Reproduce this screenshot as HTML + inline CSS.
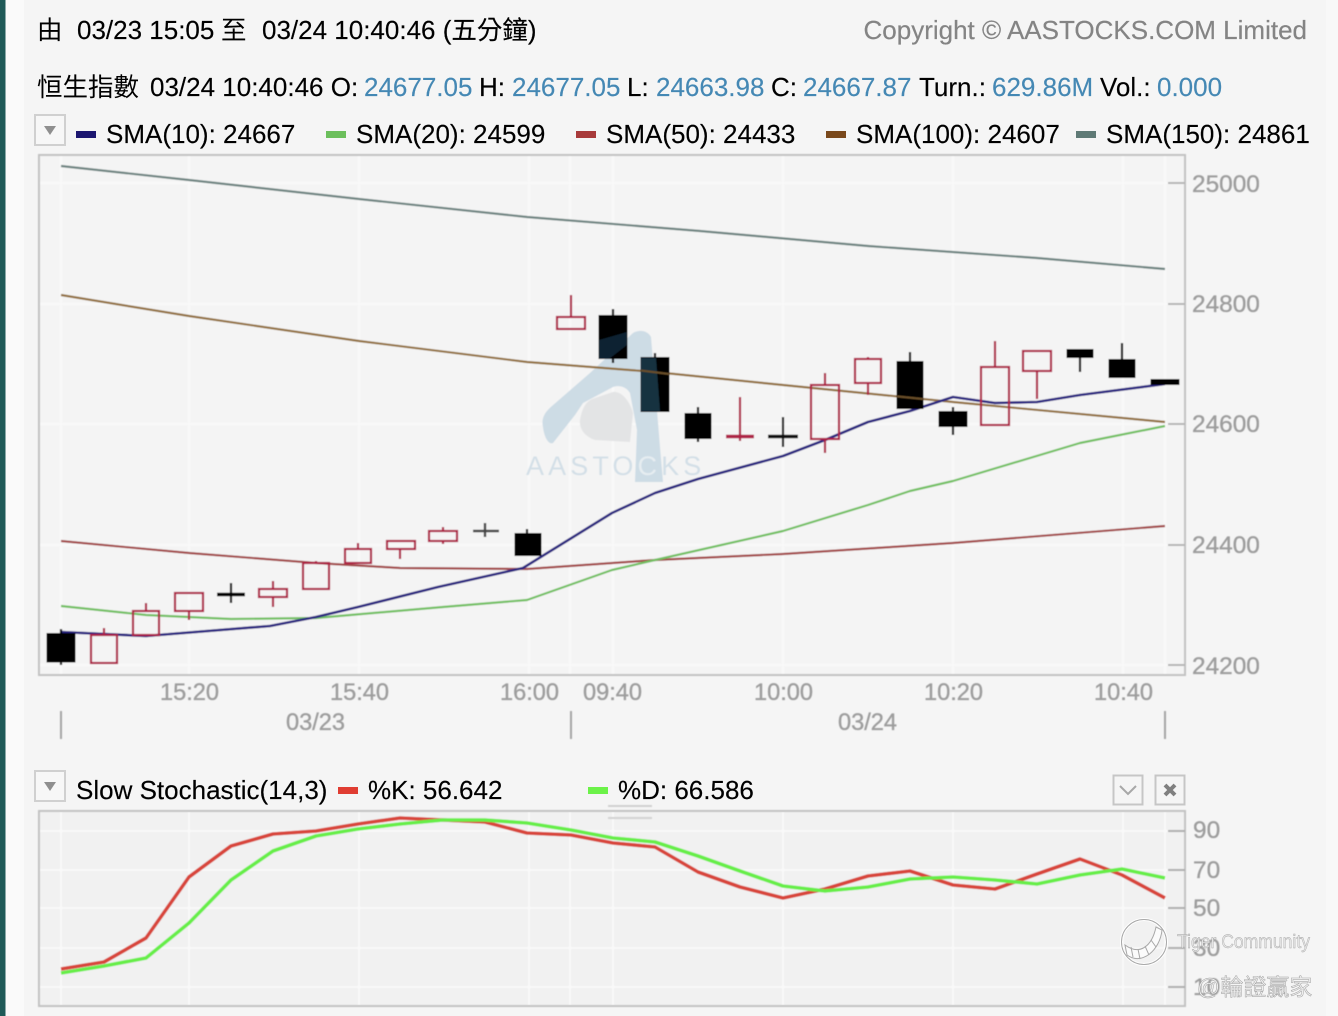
<!DOCTYPE html>
<html lang="zh-Hant">
<head>
<meta charset="utf-8">
<title>AASTOCKS Chart</title>
<style>
html,body{margin:0;padding:0;width:1338px;height:1016px;overflow:hidden;background:#f5f5f5}
svg{display:block;position:absolute;left:0;top:0}
text{font-family:"Liberation Sans","Noto Sans CJK TC",sans-serif}
.t{font-size:26px;fill:#000;stroke:#000;stroke-width:.15}
.c{font-size:25.5px;fill:#000}
.b{font-size:26px;fill:#4488b4;stroke:#4488b4;stroke-width:.15}
.g{font-size:24.4px;fill:#9d9d9d;stroke:#9d9d9d;stroke-width:.35}
.x{font-size:23.6px;fill:#9d9d9d;stroke:#9d9d9d;stroke-width:.35}
.r{fill:none;stroke:#ad2045;stroke-width:2.2}
.w{stroke:#ad2045;stroke-width:2.2}
.k{fill:#000;stroke:#000;stroke-width:1}
.kw{stroke:#000;stroke-width:2.2}
.ln{fill:none;stroke-linejoin:round}
</style>
</head>
<body>
<svg width="1338" height="1016" viewBox="0 0 1338 1016" xmlns="http://www.w3.org/2000/svg">
<defs><filter id="s" x="-2%" y="-2%" width="104%" height="104%"><feGaussianBlur stdDeviation="0.5"/></filter>
<filter id="h" x="-2%" y="-2%" width="104%" height="104%"><feGaussianBlur stdDeviation="0.25"/></filter></defs>
<rect x="0" y="0" width="1338" height="1016" fill="#f5f5f5"/>
<rect x="5" y="0" width="19" height="1016" fill="#fafafa"/>
<rect x="1326" y="0" width="12" height="1016" fill="#f8f8f8"/>
<rect x="0" y="0" width="5.5" height="1016" fill="#1f5a58"/>

<g filter="url(#h)">
<!-- header text -->
<text class="c" x="37" y="39">由</text>
<text class="t" x="77" y="39">03/23 15:05</text>
<text class="c" x="221" y="39">至</text>
<text class="t" x="262" y="39">03/24 10:40:46 (<tspan style="font-size:25.5px">五分鐘</tspan>)</text>
<text x="1307" y="39" text-anchor="end" style="font-size:26px;fill:#848484;stroke:#848484;stroke-width:.2">Copyright © AASTOCKS.COM Limited</text>

<text class="c" x="37" y="96">恒生指數</text>
<text class="t" x="150" y="96">03/24 10:40:46 O:</text>
<text class="b" x="364" y="96">24677.05</text>
<text class="t" x="479" y="96">H:</text>
<text class="b" x="512" y="96">24677.05</text>
<text class="t" x="627" y="96">L:</text>
<text class="b" x="656" y="96">24663.98</text>
<text class="t" x="771" y="96">C:</text>
<text class="b" x="803" y="96">24667.87</text>
<text class="t" x="919" y="96">Turn.:</text>
<text class="b" x="992" y="96">629.86M</text>
<text class="t" x="1100" y="96">Vol.:</text>
<text class="b" x="1157" y="96">0.000</text>

<!-- legend -->
<rect x="76" y="131" width="20" height="7" fill="#1b1470"/>
<text class="t" x="106" y="143">SMA(10): 24667</text>
<rect x="326" y="131" width="20" height="7" fill="#6cbf5c"/>
<text class="t" x="356" y="143">SMA(20): 24599</text>
<rect x="576" y="131" width="20" height="7" fill="#a83a3a"/>
<text class="t" x="606" y="143">SMA(50): 24433</text>
<rect x="826" y="131" width="20" height="7" fill="#7a4a1a"/>
<text class="t" x="856" y="143">SMA(100): 24607</text>
<rect x="1076" y="131" width="20" height="7" fill="#5f7a76"/>
<text class="t" x="1106" y="143">SMA(150): 24861</text>
</g>

<!-- dropdown -->
<rect x="35" y="115" width="30" height="30" fill="#f7f7f7" stroke="#d0d0d0" stroke-width="2"/>
<path d="M44 126h12l-6 9z" fill="#8f8f8f"/>

<g filter="url(#s)">
<!-- main plot -->
<rect x="39" y="155" width="1146" height="520" fill="#f4f4f4" stroke="#c2c2c2" stroke-width="2"/>
<g stroke="#f9f9f9" stroke-width="2">
<path d="M40 183H1184M40 304H1184M40 424H1184M40 545H1184M40 665H1184"/>
<path d="M61 156V674M189 156V674M359 156V674M529 156V674M570 156V674M613 156V674M783 156V674M953 156V674M1123 156V674M1165 156V674"/>
</g>
<path d="M1168 183H1185M1168 304H1185M1168 424H1185M1168 545H1185M1168 665H1185" stroke="#b5b5b5" stroke-width="2"/>

<!-- watermark -->
<path d="M633 333C640 329 648 331 651 337L660 447L663 482H635L637 430L630 393C626 386 618 385 613 387L583 403L575 415L553 443C548 445 544 436 543 427C541 418 545 412 552 406L590 373Z" fill="#cddce5"/>
<path d="M580 420C582 408 586 402 592 399L613 392C622 391 630 402 633 413L630 442L595 440C586 437 579 430 580 420Z" fill="#e3e4e5"/>
<text x="526" y="475" style="font-size:27px;fill:#d3dfe7;letter-spacing:4.1px">AASTO<tspan style="fill:#e6edf1">C</tspan>KS</text>

<!-- MAs -->
<polyline class="ln" stroke="#6d8380" stroke-width="2.2" points="61,166 189,180 359,199 527,217 700,231 868,246 1037,258 1165,269"/>
<polyline class="ln" stroke="#93713f" stroke-width="2.2" points="61,295 189,316 359,341 527,362 655,372 783,385 953,402 1165,422"/>
<polyline class="ln" stroke="#a34848" stroke-width="2.2" points="61,541 189,553 316,563 400,568 527,569 655,560 783,554 953,543 1165,526"/>
<polyline class="ln" stroke="#72c062" stroke-width="2.2" points="61,606 146,615 231,619 316,618 443,607 527,600 612,570 655,560 783,531 868,505 910,491 953,481 1080,443 1165,426"/>
<polyline class="ln" stroke="#2b2580" stroke-width="2.6" points="61,632 146,636 270,626 316,617 358,607 438,587 523,568 612,513 655,493 698,479 783,456 825,440 868,422 910,411 953,397 995,403 1037,402 1080,395 1165,384"/>

<!-- candles -->
<path class="kw" d="M61 629V665M527 529V556M613 309V363M655 353V412M698 407V442M910 352V409M953 407V435M1080 358V372M1122 343V378"/>
<rect class="k" x="47" y="633.5" width="28" height="28.5"/>
<rect class="k" x="515" y="533.5" width="26" height="22"/>
<rect class="k" x="599" y="315.5" width="28" height="43"/>
<rect class="k" x="641" y="357.5" width="28" height="54"/>
<rect class="k" x="685" y="413.5" width="26" height="25"/>
<rect class="k" x="897" y="361.5" width="26" height="47"/>
<rect class="k" x="939" y="411.5" width="28" height="15"/>
<rect class="k" x="1067" y="349.5" width="26" height="8"/>
<rect class="k" x="1109" y="359.5" width="26" height="18"/>
<rect class="k" x="1151" y="379.5" width="28" height="5"/>
<!-- faint watermark tint over the dark candles -->
<path d="M641 358H656L660 411H641Z" fill="#16313f"/>
<path d="M599 359V340L627 332V345L609 359Z" fill="#0d2430"/>
<path d="M641 370.5L669 374" stroke="#6b4f2a" stroke-width="2"/>
<path d="M897 396.4L923 399" stroke="#6b4f2a" stroke-width="2"/>
<path class="kw" d="M231 583V603"/>
<path d="M217 594.5H245" stroke="#000" stroke-width="3.500"/>
<path d="M473 531H499M485 523V537" stroke="#444" stroke-width="2.400"/>
<path d="M783 417V447" stroke="#111" stroke-width="2.200"/>
<path d="M768 436.5H798" stroke="#111" stroke-width="3.500"/>
<path d="M726 436.5H754" stroke="#ad2045" stroke-width="3.500"/>
<path class="w" d="M740 397V441M104 628V635M146 603V611M189 611V620M273 581V589M273 597V607M316 561V563M358 543V549M400 549V559M443 527V531M443 541V544M571 295V317M825 373V386M825 439V453M868 357V359M868 383V395M995 341V367M1037 371V399"/>
<rect class="r" x="91" y="635" width="26" height="28"/>
<rect class="r" x="133" y="611" width="26" height="24"/>
<rect class="r" x="175" y="593" width="28" height="18"/>
<rect class="r" x="259" y="589" width="28" height="8"/>
<rect class="r" x="303" y="563" width="26" height="26"/>
<rect class="r" x="345" y="549" width="26" height="14"/>
<rect class="r" x="387" y="541" width="28" height="8"/>
<rect class="r" x="429" y="531" width="28" height="10"/>
<rect class="r" x="557" y="317" width="28" height="12"/>
<rect class="r" x="811" y="385" width="28" height="54"/>
<rect class="r" x="855" y="359" width="26" height="24"/>
<rect class="r" x="981" y="367" width="28" height="58"/>
<rect class="r" x="1023" y="351" width="28" height="20"/>
</g>

<g filter="url(#s)">
<!-- y labels main -->
<text class="g" x="1192" y="192">25000</text>
<text class="g" x="1192" y="312">24800</text>
<text class="g" x="1192" y="432">24600</text>
<text class="g" x="1192" y="553">24400</text>
<text class="g" x="1192" y="674">24200</text>
<!-- x labels -->
<text class="x" x="160" y="700">15:20</text>
<text class="x" x="330" y="700">15:40</text>
<text class="x" x="500" y="700">16:00</text>
<text class="x" x="583" y="700">09:40</text>
<text class="x" x="754" y="700">10:00</text>
<text class="x" x="924" y="700">10:20</text>
<text class="x" x="1094" y="700">10:40</text>
<text class="x" x="286" y="730">03/23</text>
<text class="x" x="838" y="730">03/24</text>
<path d="M61 711V739M571 711V739M1165 711V739" stroke="#a6a6a6" stroke-width="2"/>
</g>

<!-- stochastic header -->
<rect x="35" y="771" width="30" height="30" fill="#f7f7f7" stroke="#d0d0d0" stroke-width="2"/>
<path d="M44 782h12l-6 9z" fill="#8f8f8f"/>
<g filter="url(#h)">
<text class="t" x="76" y="799">Slow Stochastic(14,3)</text>
<rect x="338" y="787" width="20" height="7" fill="#e03c30"/>
<text class="t" x="368" y="799">%K: 56.642</text>
<rect x="588" y="787" width="20" height="7" fill="#6cf24a"/>
<text class="t" x="618" y="799">%D: 66.586</text>
</g>
<rect x="1113.500" y="775.500" width="29" height="29" fill="none" stroke="#c6c6c6" stroke-width="2"/>
<path d="M1120 786l8 8 8-8" fill="none" stroke="#a8a8a8" stroke-width="2"/>
<rect x="1155.500" y="775.500" width="29" height="29" fill="none" stroke="#c6c6c6" stroke-width="2"/>
<path d="M1165 785l10 10M1175 785l-10 10" fill="none" stroke="#808080" stroke-width="4"/>

<g filter="url(#s)">
<!-- stochastic plot -->
<rect x="39" y="811" width="1146" height="195" fill="#f1f1f1" stroke="#c2c2c2" stroke-width="2"/>
<g stroke="#f9f9f9" stroke-width="2">
<path d="M40 831H1184M40 870H1184M40 908H1184M40 948H1184M40 987H1184"/>
<path d="M61 812V1005M189 812V1005M359 812V1005M529 812V1005M570 812V1005M613 812V1005M783 812V1005M953 812V1005M1123 812V1005M1165 812V1005"/>
</g>
<path d="M1168 831H1185M1168 870H1185M1168 908H1185M1168 948H1185M1168 987H1185" stroke="#adadad" stroke-width="2"/>
<path d="M608 806H652M608 818H652" stroke="#d2d2d2" stroke-width="2"/>
<polyline class="ln" stroke="#d8443a" stroke-width="3.600" points="61,969 104,962 146,938 189,877 231,846 273,834 316,831 358,824 400,818 443,820 485,822 527,833 571,835 613,843 655,847 698,872 740,887 783,898 825,889 868,876 910,871 953,885 995,889 1037,874 1080,859 1122,875 1165,898"/>
<polyline class="ln" stroke="#66ee46" stroke-width="3.600" points="61,973 104,966 146,958 189,923 231,880 273,851 316,836 358,829 400,824 443,820 485,820 527,823 571,830 613,838 655,842 698,856 740,871 783,886 825,891 868,887 910,879 953,877 995,880 1037,884 1080,875 1122,869 1165,878"/>
<text class="g" x="1193" y="838">90</text>
<text class="g" x="1193" y="878">70</text>
<text class="g" x="1193" y="916">50</text>
<text class="g" x="1193" y="956">30</text>
<text class="g" x="1193" y="995">10</text>
</g>

<!-- tiger community watermark -->
<g>
<circle cx="1144" cy="942" r="22.500" fill="none" stroke="#ffffff" stroke-width="3"/>
<circle cx="1144" cy="942" r="22.500" fill="none" stroke="#a8a8a8" stroke-width="1"/>
<path d="M1125 945C1140 956 1152 946 1156 927L1162 930C1160 950 1142 966 1127 955Z" fill="#fbfbfb" stroke="#a8a8a8" stroke-width="1"/>
<path d="M1131 947L1133 957M1138 949L1140 959M1145 946L1149 955M1151 940L1156 947" stroke="#a8a8a8" stroke-width="1"/>
<text x="1177" y="948" textLength="133" lengthAdjust="spacingAndGlyphs" style="font-size:19px;fill:#e4e4e4;stroke:#a5a5a5;stroke-width:.4">Tiger Community</text>
<text x="1197" y="995" style="font-size:23px;fill:#eeeeee;stroke:#9c9c9c;stroke-width:.45">@輪證贏家</text>
</g>
</svg>
</body>
</html>
